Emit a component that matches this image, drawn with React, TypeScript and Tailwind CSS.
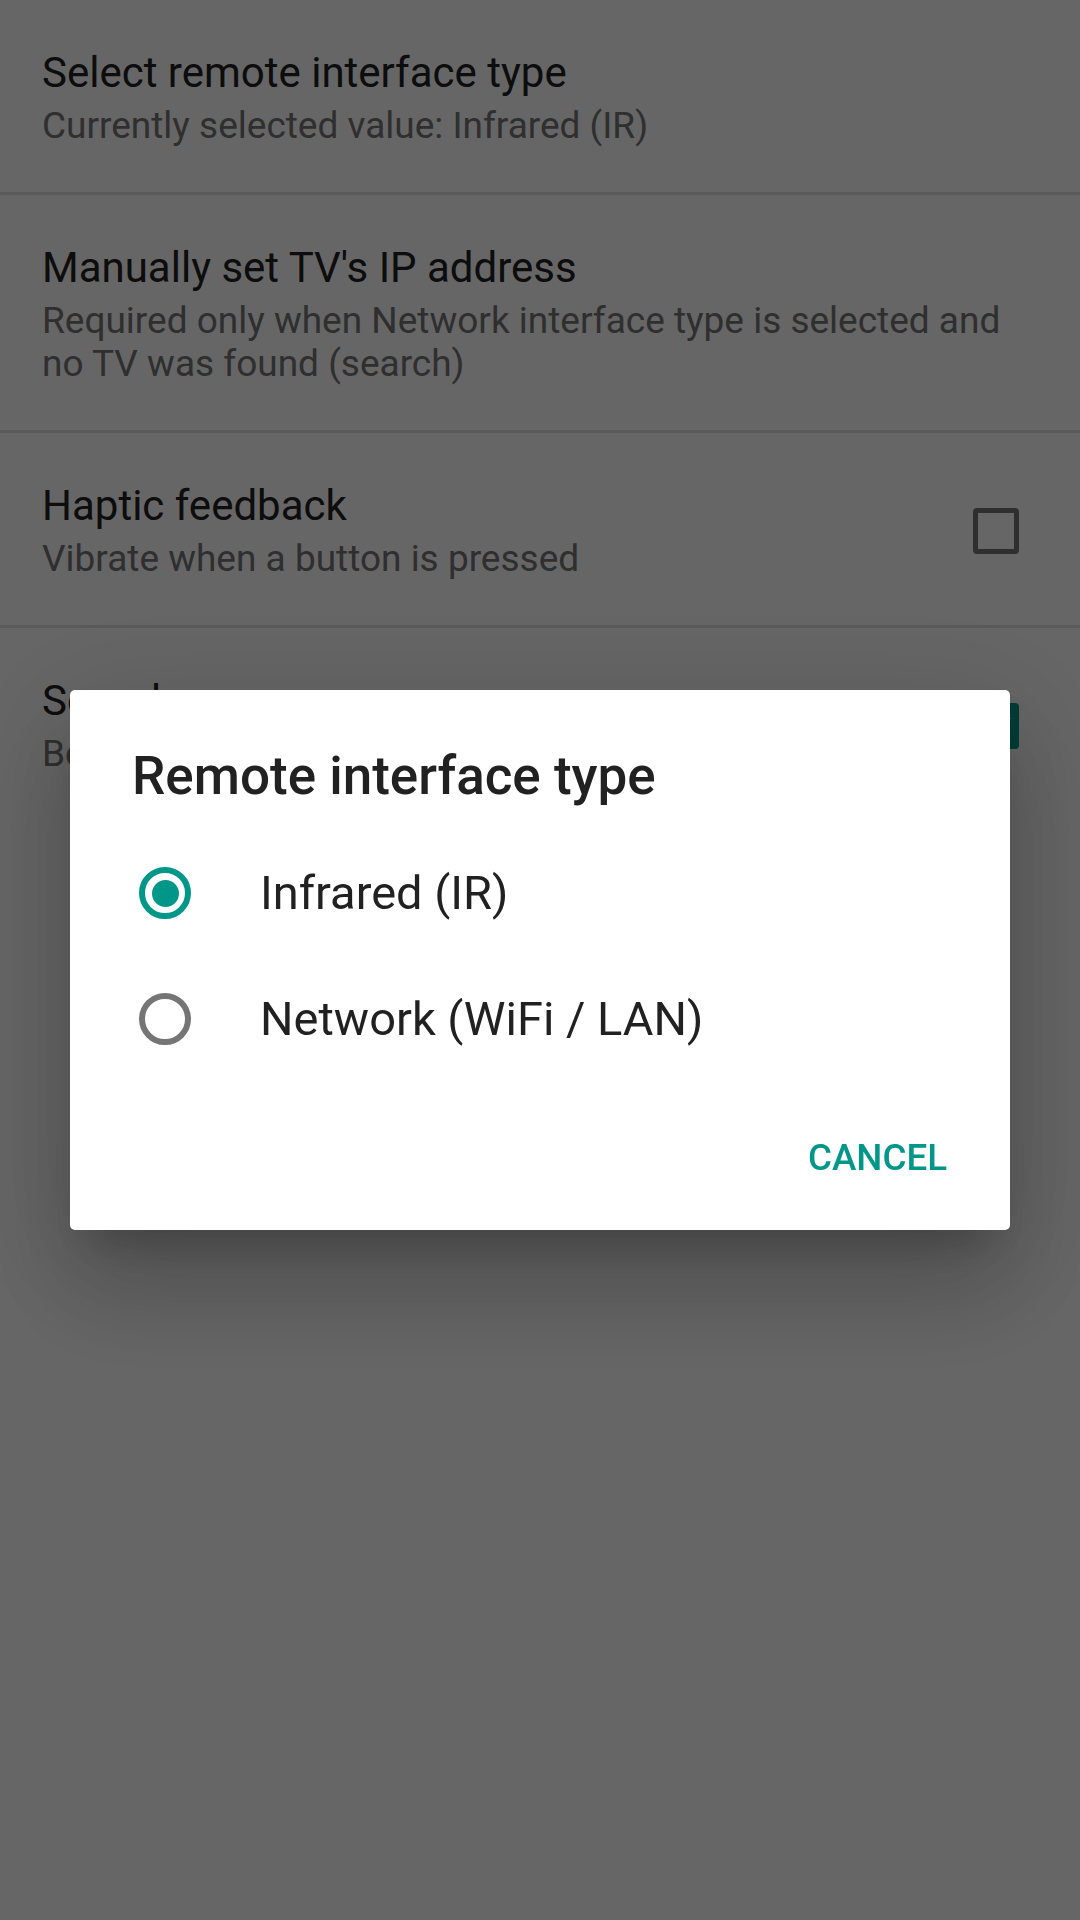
import React from "react";

function Checkbox({ checked }: { checked?: boolean }) {
  if (checked) {
    return (
      <div className="flex h-[46px] w-[46px] shrink-0 items-center justify-center rounded-[4px] bg-[#009688]">
        <svg viewBox="0 0 24 24" className="h-[40px] w-[40px]">
          <path d="M5 12.5l4.5 4.5L19 7.5" fill="none" stroke="#ffffff" strokeWidth="2.6" strokeLinecap="square" />
        </svg>
      </div>
    );
  }
  return <div className="h-[46px] w-[46px] shrink-0 rounded-[4px] border-[5.5px] border-[#757575]" />;
}

function Pref({
  title,
  summary,
  checkbox,
}: {
  title: string;
  summary: string;
  checkbox?: "on" | "off";
}) {
  return (
    <div className={`flex items-center pl-[42px] pt-[48px] pb-[45px] ${checkbox ? "pr-[61px]" : "pr-[40px]"}`}>
      <div className="flex min-w-0 flex-1 flex-col">
        <div className="text-[42px] leading-[50px] text-[#212121]">{title}</div>
        <div className="mt-[6px] text-[37px] leading-[43px] text-[#757575]">{summary}</div>
      </div>
      {checkbox ? <Checkbox checked={checkbox === "on"} /> : null}
    </div>
  );
}

function Divider() {
  return <div className="h-[3px] bg-[#e0e0e0]" />;
}

function Radio({ checked, label }: { checked?: boolean; label: string }) {
  return (
    <div className="flex h-[126px] items-center gap-[69px] pl-[69px]">
      <div
        className={`flex h-[52px] w-[52px] shrink-0 items-center justify-center rounded-full border-[6px] ${
          checked ? "border-[#009688]" : "border-[#757575]"
        }`}
      >
        {checked ? <div className="h-[27px] w-[27px] rounded-full bg-[#009688]" /> : null}
      </div>
      <div className="text-[47px] text-[#212121]">{label}</div>
    </div>
  );
}

export default function App() {
  return (
    <div className="relative min-h-[1920px] bg-white font-['Roboto','Noto_Sans',sans-serif]">
      <Pref title="Select remote interface type" summary="Currently selected value: Infrared (IR)" />
      <Divider />
      <Pref
        title="Manually set TV's IP address"
        summary="Required only when Network interface type is selected and no TV was found (search)"
      />
      <Divider />
      <Pref title="Haptic feedback" summary="Vibrate when a button is pressed" checkbox="off" />
      <Divider />
      <Pref title="Sound" summary="Beep when a button is pressed" checkbox="on" />

      <div className="fixed inset-0 bg-[rgba(0,0,0,0.6)]" />

      <div className="fixed inset-0 flex items-center justify-center px-[70px]">
        <div className="w-full rounded-[5px] bg-white shadow-[0_63px_100px_8px_rgba(0,0,0,0.14),0_24px_120px_21px_rgba(0,0,0,0.12),0_29px_39px_-18px_rgba(0,0,0,0.2)]">
          <div className="pl-[62px] pt-[56px] text-[53px] font-medium leading-[61px] text-[#212121]">
            Remote interface type
          </div>
          <div className="mt-[23px] flex flex-col">
            <Radio checked label="Infrared (IR)" />
            <Radio label="Network (WiFi / LAN)" />
          </div>
          <div className="flex justify-end pb-[51px] pr-[63px] pt-[54px]">
            <div className="text-[36.75px] font-medium leading-[43px] text-[#009688]">CANCEL</div>
          </div>
        </div>
      </div>
    </div>
  );
}
